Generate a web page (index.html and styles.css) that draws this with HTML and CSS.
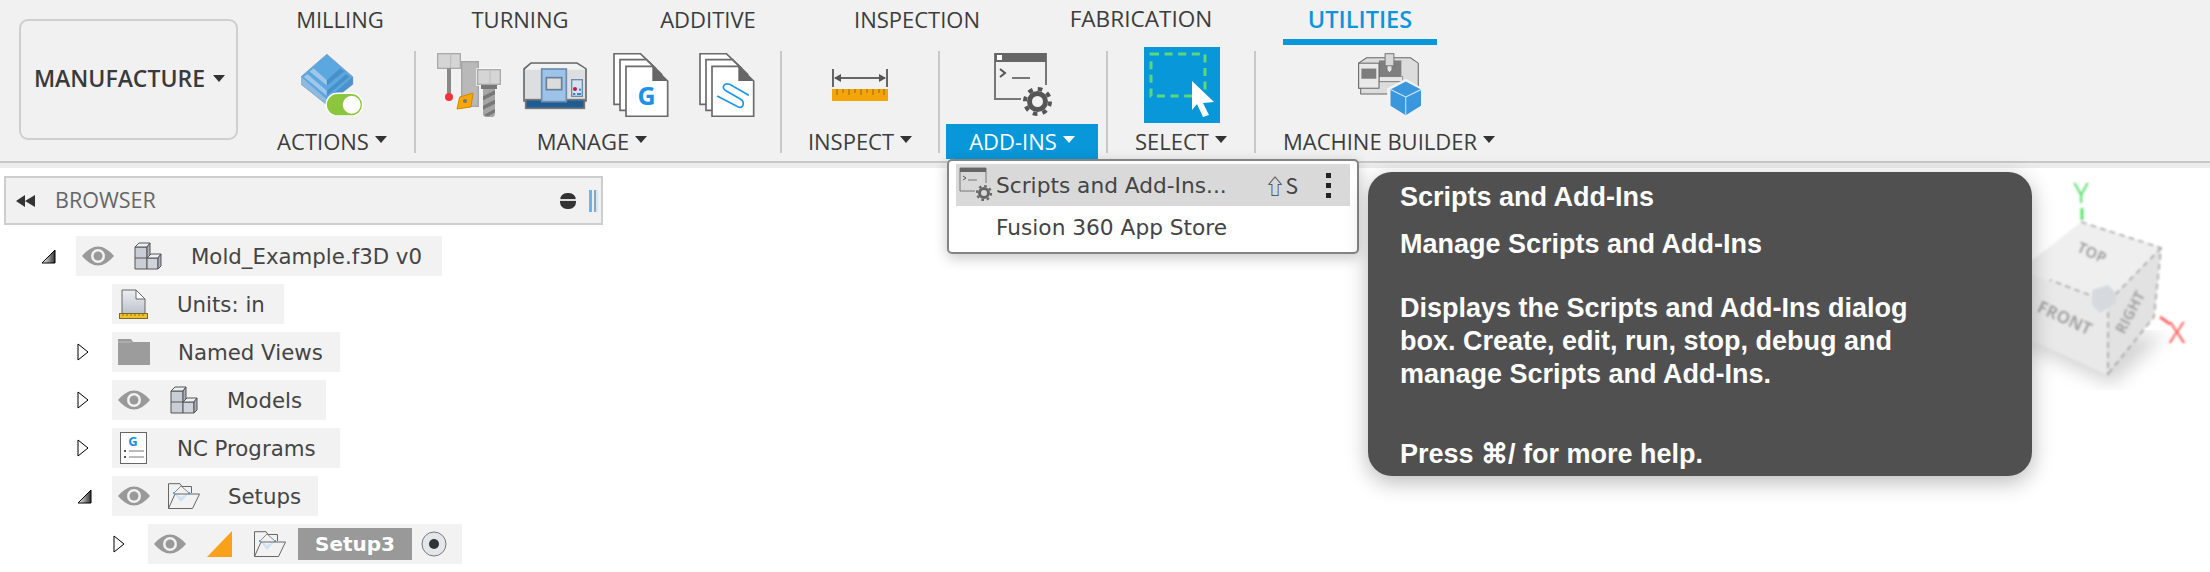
FILE: index.html
```html
<!DOCTYPE html>
<html lang="en">
<head>
<meta charset="utf-8">
<title>Fusion 360 Manufacture</title>
<link rel="stylesheet" href="styles.css">
</head>
<body>
<header class="toolbar">
  <button class="workspace">MANUFACTURE<i class="caret caret-ws"></i></button>
  <div class="ribbon">
    <nav class="tabs">
      <span class="tab t-mill">MILLING</span>
      <span class="tab t-turn">TURNING</span>
      <span class="tab t-add">ADDITIVE</span>
      <span class="tab t-insp">INSPECTION</span>
      <span class="tab t-fab">FABRICATION</span>
      <span class="tab t-util active">UTILITIES</span>
    </nav>
    <div class="groups">
      <section class="group g-actions">
        <div class="icons">
          <svg width="63" height="63" viewBox="126 36 190 190">
            <polygon points="204,40 282,108 282,130 204,192 126,130 126,108" fill="#5ba7e0" stroke="#7fa3c4" stroke-width="3"/>
            <polygon points="126,108 204,176 204,192 126,130" fill="#8fb9dd"/>
            <polygon points="204,176 282,108 282,130 204,192" fill="#4c92cc"/>
            <polygon points="146,100 204,150 204,165 134,108" fill="#a0c6e8"/>
            <polygon points="204,150 262,100 272,108 204,165" fill="#4a90c8"/>
            <polygon points="164,82 204,118 204,134 152,92" fill="#a0c6e8"/>
            <polygon points="204,118 244,82 256,92 204,134" fill="#4a90c8"/>
            <rect x="200" y="155" width="114" height="72" rx="36" fill="#fff"/>
            <rect x="204" y="160" width="106" height="64" rx="32" fill="#8cc63f"/>
            <circle cx="279" cy="192" r="27" fill="#fff"/>
          </svg>
        </div>
        <div class="label">ACTIONS<i class="caret"></i></div>
      </section>
      <div class="sep"></div>
      <section class="group g-manage">
        <div class="icons icons-gap">
          <svg width="64" height="64" viewBox="534 36 192 192">
            <rect x="536" y="38" width="68" height="44" fill="#d5d5d5" stroke="#aaa" stroke-width="4"/>
            <line x1="575" y1="38" x2="575" y2="82" stroke="#bbb" stroke-width="3"/>
            <rect x="564" y="82" width="12" height="80" fill="#888"/>
            <circle cx="570" cy="168" r="12" fill="#f2333b"/>
            <rect x="608" y="62" width="50" height="134" fill="#b9b9b9" stroke="#a5a5a5" stroke-width="4"/>
            <rect x="652" y="82" width="76" height="52" fill="#fff"/>
            <rect x="656" y="86" width="68" height="44" fill="#d5d5d5" stroke="#aaa" stroke-width="4"/>
            <line x1="693" y1="86" x2="693" y2="130" stroke="#bbb" stroke-width="3"/>
            <rect x="666" y="132" width="48" height="12" fill="#777"/>
            <path d="M672 144H708V218Q708 228 696 228H684Q672 228 672 218Z" fill="#a5a5a5"/>
            <path d="M672 166L708 148V160L672 178ZM672 194L708 176V188L672 206ZM674 222L708 204V214L688 226Z" fill="#777"/>
            <polygon points="602,168 642,156 636,198 594,204" fill="#f7a70a" stroke="#d08a00" stroke-width="3"/>
            <circle cx="618" cy="180" r="6" fill="#777"/>
          </svg>
          <svg width="64" height="64" viewBox="792 36 192 192">
            <path d="M795 180V84L816 66H954L981 84V180Z" fill="#dcdedf" stroke="#6a6a6a" stroke-width="5"/>
            <path d="M798 86H978V84L953 69H817Z" fill="#f2f2f2"/>
            <rect x="800" y="176" width="176" height="26" fill="#1e5c91" stroke="#777" stroke-width="5"/>
            <rect x="848" y="84" width="74" height="98" fill="#9dc3e8" stroke="#6d8cb0" stroke-width="5"/>
            <rect x="862" y="110" width="46" height="36" fill="#dcdcdc" stroke="#6a7f96" stroke-width="5"/>
            <rect x="938" y="116" width="32" height="50" fill="#d5e3f0" stroke="#6d8cb0" stroke-width="4"/>
            <circle cx="948" cy="144" r="6" fill="#d0104c"/>
            <rect x="942" y="156" width="7" height="6" fill="#2e86d8"/>
            <rect x="954" y="156" width="12" height="6" fill="#2e86d8"/>
            <rect x="960" y="143" width="6" height="6" fill="#2e86d8"/>
          </svg>
          <svg width="64" height="64" viewBox="1052 36 192 192">
            <path d="M1067 190V38H1146L1192 82V190Z" fill="#fff" stroke="#6a6a6a" stroke-width="5"/>
            <path d="M1085 208V56H1164L1210 100V208Z" fill="#fff" stroke="#6a6a6a" stroke-width="5"/>
            <path d="M1103 226V76H1182L1228 120V226Z" fill="#fff" stroke="#6a6a6a" stroke-width="5"/>
            <polygon points="1182,76 1228,120 1182,120" fill="#666"/>
            <text x="1165" y="192" class="doc-g">G</text>
          </svg>
          <svg width="64" height="64" viewBox="1310 36 192 192">
            <path d="M1325 190V38H1404L1450 82V190Z" fill="#fff" stroke="#6a6a6a" stroke-width="5"/>
            <path d="M1343 208V56H1422L1468 100V208Z" fill="#fff" stroke="#6a6a6a" stroke-width="5"/>
            <path d="M1361 226V76H1440L1486 120V226Z" fill="#fff" stroke="#6a6a6a" stroke-width="5"/>
            <polygon points="1440,76 1486,120 1440,120" fill="#666"/>
            <path d="M1378 166L1440 198C1456 204 1460 182 1446 174L1404 150C1386 140 1398 124 1414 130L1470 162" fill="none" stroke="#2196e6" stroke-width="5" stroke-linecap="round"/>
          </svg>
        </div>
        <div class="label label-manage">MANAGE<i class="caret"></i></div>
      </section>
      <div class="sep"></div>
      <section class="group g-inspect">
        <div class="icons">
          <svg width="56" height="32" viewBox="0 0 56 32">
            <path d="M1 0V18M55 0V18" stroke="#666" stroke-width="2"/>
            <path d="M3 9H53" stroke="#666" stroke-width="2"/>
            <path d="M2 9L9 5V13ZM54 9L47 5V13Z" fill="#555"/>
            <rect x="0" y="20" width="56" height="12" fill="#f5a50a"/>
            <path d="M5 20V26M11 20V24M17 20V26M23 20V24M29 20V26M35 20V24M41 20V26M47 20V24M52 20V26" stroke="#8c6a20" stroke-width="1"/>
          </svg>
        </div>
        <div class="label">INSPECT<i class="caret"></i></div>
      </section>
      <div class="sep"></div>
      <section class="group g-addins">
        <div class="icons">
          <svg class="addin-icon" width="60" height="64" viewBox="0 0 60 64">
            <path d="M27 46H1V1H52V32" fill="none" stroke="#777" stroke-width="2"/>
            <rect x="1" y="0" width="51" height="9" fill="#666"/>
            <rect x="3" y="2" width="5" height="5" fill="#fff"/>
            <path d="M6 16L11 20L6 24" fill="none" stroke="#555" stroke-width="2"/>
            <path d="M18 25H36" stroke="#777" stroke-width="2"/>
            <circle cx="43.5" cy="48.5" r="8" fill="none" stroke="#555" stroke-width="5"/>
            <circle cx="43.5" cy="48.5" r="12.5" fill="none" stroke="#555" stroke-width="4" stroke-dasharray="4.6 5.2"/>
          </svg>
        </div>
        <div class="label label-on">ADD-INS<i class="caret caret-on"></i></div>
      </section>
      <div class="sep"></div>
      <section class="group g-select">
        <div class="icons">
          <svg class="select-icon" width="76" height="76" viewBox="0 0 76 76">
            <rect x="7" y="7" width="54" height="42" fill="none" stroke="#5cd87a" stroke-width="3" stroke-dasharray="8 5.6"/>
            <polygon points="48,34 70,55 59,56 65,68 59,70 53,57 48,63" fill="#fff"/>
          </svg>
        </div>
        <div class="label">SELECT<i class="caret"></i></div>
      </section>
      <div class="sep"></div>
      <section class="group g-builder">
        <div class="icons">
          <svg width="63" height="63" viewBox="720 42 186 186">
            <path d="M722 72L745 56H875L898 72V144H830V163H728V145H722Z" fill="#dcdcdc" stroke="#666" stroke-width="3"/>
            <rect x="782" y="64" width="66" height="64" fill="#7f7f7f"/>
            <rect x="800" y="44" width="26" height="36" fill="#d8d8d8" stroke="#777" stroke-width="3"/>
            <path d="M806 80H820V92L813 100L806 92Z" fill="#e5e5e5" stroke="#777" stroke-width="2"/>
            <rect x="782" y="112" width="70" height="14" fill="#e8e8e8" stroke="#777" stroke-width="2"/>
            <rect x="722" y="72" width="60" height="74" fill="#e9e9e9" stroke="#666" stroke-width="3"/>
            <rect x="730" y="88" width="44" height="30" fill="#7d7d7d"/>
            <polygon points="861,118 910,146 910,200 861,228 806,200 806,146" fill="#f2f2f2"/>
            <polygon points="861,126 906,150 906,198 861,226 816,198 816,150" fill="#3a97dd"/>
            <path d="M861 172L816 150M861 172L906 150M861 172V226" stroke="#cfe6f7" stroke-width="3"/>
          </svg>
        </div>
        <div class="label">MACHINE BUILDER<i class="caret"></i></div>
      </section>
    </div>
  </div>
</header>

<main class="workarea">
  <div class="browser-bar">
    <svg class="rewind" width="19" height="12" viewBox="0 0 19 12"><path d="M0 6L9 0V12ZM9 6L19 0V12Z" fill="#333"/></svg>
    <span class="browser-title">BROWSER</span>
    <span class="minus"></span>
    <span class="grip"></span>
  </div>

  <ul class="tree">
    <li class="row d0">
      <span class="slot"><svg class="tw-open" width="15" height="15" viewBox="0 0 15 15"><use href="#twist-open"/></svg></span>
      <div class="item item-mold">
        <svg class="eye" viewBox="0 0 32 20"><use href="#eye"/></svg>
        <svg class="ic" width="28" height="28" viewBox="0 0 28 28"><use href="#component"/></svg>
        <span class="name">Mold_Example.f3D v0</span>
      </div>
    </li>
    <li class="row d1">
      <span class="slot"></span>
      <div class="item item-units">
        <svg class="ic" width="29" height="30" viewBox="0 0 29 30">
          <path d="M3 25V1H17L26 10V25Z" fill="url(#blk)" stroke="#666"/>
          <path d="M17 1V10H26Z" fill="#fff" stroke="#666"/>
          <rect x="0.5" y="24.5" width="28" height="5" fill="#eec02c" stroke="#7a6a24"/>
          <path d="M4 25V27M8 25V27M12 25V27M16 25V27M20 25V27M24 25V27" stroke="#8a7420"/>
        </svg>
        <span class="name">Units: in</span>
      </div>
    </li>
    <li class="row d1">
      <span class="slot"><svg class="tw-closed" width="12" height="18" viewBox="0 0 12 18"><use href="#twist-closed"/></svg></span>
      <div class="item item-views">
        <svg class="ic" width="32" height="26" viewBox="0 0 32 26"><path d="M0 0H13L15 3H32V26H0Z" fill="#9c9c9c"/><path d="M0 3H13" stroke="#bbb" stroke-width="1"/></svg>
        <span class="name">Named Views</span>
      </div>
    </li>
    <li class="row d1">
      <span class="slot"><svg class="tw-closed" width="12" height="18" viewBox="0 0 12 18"><use href="#twist-closed"/></svg></span>
      <div class="item item-models">
        <svg class="eye" viewBox="0 0 32 20"><use href="#eye"/></svg>
        <svg class="ic" width="28" height="28" viewBox="0 0 28 28"><use href="#component"/></svg>
        <span class="name">Models</span>
      </div>
    </li>
    <li class="row d1">
      <span class="slot"><svg class="tw-closed" width="12" height="18" viewBox="0 0 12 18"><use href="#twist-closed"/></svg></span>
      <div class="item item-nc">
        <svg class="ic" width="27" height="32" viewBox="0 0 27 32">
          <rect x="0.5" y="0.5" width="26" height="31" fill="#fff" stroke="#666"/>
          <text x="13" y="14" class="nc-g">G</text>
          <path d="M9 19H24M9 25H24" stroke="#777" stroke-width="1"/>
          <path d="M4 18H6V20H4ZM4 24H6V26H4Z" fill="#555"/>
        </svg>
        <span class="name">NC Programs</span>
      </div>
    </li>
    <li class="row d1">
      <span class="slot"><svg class="tw-open" width="15" height="15" viewBox="0 0 15 15"><use href="#twist-open"/></svg></span>
      <div class="item item-setups">
        <svg class="eye" viewBox="0 0 32 20"><use href="#eye"/></svg>
        <svg class="ic" width="32" height="26" viewBox="0 0 32 26"><use href="#setup-folder"/></svg>
        <span class="name">Setups</span>
      </div>
    </li>
    <li class="row d2">
      <span class="slot"><svg class="tw-closed" width="12" height="18" viewBox="0 0 12 18"><use href="#twist-closed"/></svg></span>
      <div class="item item-setup">
        <svg class="eye" viewBox="0 0 32 20"><use href="#eye"/></svg>
        <svg class="tri" width="25" height="26" viewBox="0 0 25 26"><polygon points="0,26 25,0 25,26" fill="#f9a11b"/></svg>
        <svg class="folder" width="32" height="26" viewBox="0 0 32 26"><use href="#setup-folder"/></svg>
        <span class="setup-label">Setup3</span>
        <svg class="radio" width="26" height="26" viewBox="0 0 26 26">
          <circle cx="13" cy="13" r="12" fill="#e4e6ec" stroke="#777"/>
          <circle cx="13" cy="13" r="5" fill="#333"/>
        </svg>
      </div>
    </li>
  </ul>

  <svg class="defs" width="0" height="0">
    <defs>
      <linearGradient id="tw" x1="0" y1="0" x2="1" y2="0"><stop offset="0" stop-color="#fff"/><stop offset="1" stop-color="#333"/></linearGradient>
      <linearGradient id="blk" x1="0" y1="0" x2="0" y2="1"><stop offset="0" stop-color="#eceef1"/><stop offset="1" stop-color="#bcc1cb"/></linearGradient>
      <symbol id="eye" viewBox="0 0 32 20">
        <path d="M0 10Q16 -9 32 10Q16 29 0 10Z" fill="#999"/>
        <circle cx="16" cy="10" r="7" fill="#f2f2f2"/>
        <circle cx="16" cy="10" r="4.5" fill="#999"/>
      </symbol>
      <symbol id="twist-open" viewBox="0 0 15 15"><polygon points="1,14 14,1 14,14" fill="url(#tw)" stroke="#000"/></symbol>
      <symbol id="twist-closed" viewBox="0 0 12 18"><polygon points="1,1 11,9 1,17" fill="#fff" stroke="#000"/></symbol>
      <symbol id="component" viewBox="0 0 28 28">
        <path d="M1 5H13V27H1Z" fill="#c9cdd6" stroke="#555"/>
        <path d="M1 5L5 1H16L13 5Z" fill="#eef0f3" stroke="#555"/>
        <path d="M13 5L16 1V13L13 16Z" fill="#a9aeb8" stroke="#555"/>
        <path d="M1 16H13" stroke="#555"/>
        <path d="M13 16H24V27H13Z" fill="#cfd3db" stroke="#555"/>
        <path d="M13 16L17 12H27L24 16Z" fill="#eef0f3" stroke="#555"/>
        <path d="M24 16L27 12V24L24 27Z" fill="#a9aeb8" stroke="#555"/>
      </symbol>
      <symbol id="setup-folder" viewBox="0 0 32 26">
        <path d="M.5 25.5V.7H12L14 3.5H23.5V10" fill="none" stroke="#666"/>
        <path d="M6 10L13 3L21 10" fill="none" stroke="#888"/>
        <path d="M6 10L13 19L21 10L13 14Z" fill="#cfe3f5"/>
        <path d="M5 9H7V11H5ZM20 9H22V11H20Z" fill="#5aa9e6"/>
        <path d="M.5 25.5L7 11H31.5L24.5 25.5Z" fill="none" stroke="#666"/>
      </symbol>
    </defs>
  </svg>

  <svg class="viewcube" width="205" height="250" viewBox="0 -30 205 250">
    <defs>
      <filter id="soft"><feGaussianBlur stdDeviation="0.9"/></filter>
      <filter id="shadow"><feGaussianBlur stdDeviation="9"/></filter>
    </defs>
    <polygon points="0,150 112,200 165,150" fill="#aaa" opacity=".5" filter="url(#shadow)"/>
    <g filter="url(#soft)">
      <polygon points="81,37 161,63 108,117 20,85" fill="#efefef"/>
      <polygon points="20,85 108,117 107,190 20,150" fill="#e9e9e9"/>
      <polygon points="108,117 161,63 154,132 107,190" fill="#e2e2e2"/>
      <path d="M81 37L161 63L154 132L107 190M108 117V190M108 117L161 63M108 117L50 95" fill="none" stroke="#999" stroke-width="1.5" stroke-dasharray="6 4"/>
      <path d="M82 23V35" stroke="#55e26a" stroke-width="3"/>
      <path d="M160 132L170 139" stroke="#ff6b6b" stroke-width="3"/>
      <polygon points="92,105 108,100 116,108 116,118 100,128 92,120" fill="#d6dade"/>
      <text x="0" y="0" class="cube-txt" transform="translate(76 66) rotate(25)">TOP</text>
      <text x="0" y="0" class="cube-txt cube-lg" transform="translate(36 126) rotate(25)">FRONT</text>
      <text x="0" y="0" class="cube-txt" transform="translate(124 150) rotate(-62)">RIGHT</text>
      <text x="81" y="18" class="axis axis-y">Y</text>
      <text x="177" y="158" class="axis axis-x">X</text>
    </g>
  </svg>

  <div class="menu">
    <div class="menu-row menu-row-on">
      <svg class="menu-ic" width="34" height="36" viewBox="0 0 34 36">
        <path d="M16 24H1V1H27V16" fill="none" stroke="#777" stroke-width="1"/>
        <rect x="1" y="1" width="26" height="4" fill="#666"/>
        <path d="M4 9L7 11L4 13" fill="none" stroke="#555"/>
        <path d="M9 13H18" stroke="#777"/>
        <circle cx="25" cy="26" r="4.5" fill="none" stroke="#666" stroke-width="3"/>
        <circle cx="25" cy="26" r="7" fill="none" stroke="#666" stroke-width="2.2" stroke-dasharray="2.6 2.9"/>
      </svg>
      <span class="menu-text">Scripts and Add-Ins...</span>
      <span class="menu-key">⇧S</span>
      <span class="menu-dots"><i></i><i></i><i></i></span>
    </div>
    <div class="menu-row"><span class="menu-text menu-plain">Fusion 360 App Store</span></div>
  </div>

  <aside class="tip">
    <p class="tip-line tip-a">Scripts and Add-Ins</p>
    <p class="tip-line tip-b">Manage Scripts and Add-Ins</p>
    <p class="tip-line tip-c">Displays the Scripts and Add-Ins dialog<br>box. Create, edit, run, stop, debug and<br>manage Scripts and Add-Ins.</p>
    <p class="tip-line tip-d">Press ⌘/ for more help.</p>
  </aside>
</main>
</body>
</html>
```
FILE: styles.css
```css
* { box-sizing: border-box; }
html, body { margin: 0; padding: 0; }
body {
  width: 2210px;
  height: 572px;
  overflow: hidden;
  background: #fff;
  font-family: "Open Sans", "DejaVu Sans", sans-serif;
  color: #3c3c3c;
  position: relative;
}

/* toolbar */
.toolbar {
  display: flex;
  height: 163px;
  padding-left: 19px;
  background: #f1f1f1;
  border-bottom: 2px solid #c8c8c8;
}
.workspace {
  width: 219px;
  height: 121px;
  margin-top: 19px;
  padding: 0 0 3px 2px;
  background: #f1f1f1;
  border: 2px solid #cfcfcf;
  border-radius: 9px;
  font: 600 23px "Open Sans", sans-serif;
  color: #3a3a3a;
  display: flex;
  align-items: center;
  justify-content: center;
}
.ribbon { margin-left: 12px; width: 1272px; }

.tabs { display: flex; height: 45px; }
.tab {
  display: flex;
  align-items: center;
  justify-content: center;
  height: 45px;
  font-size: 22px;
  padding-bottom: 8px;
  color: #3c3c3c;
}
.t-mill { width: 180px; }
.t-turn { width: 180px; }
.t-add { width: 196px; }
.t-insp { width: 222px; }
.t-fab { width: 226px; font-size: 22.6px; }
.t-util { width: 154px; margin-left: 29px; }
.active { color: #0a96d8; font-size: 23.5px; font-weight: 600; border-bottom: 6px solid #0897d9; padding-bottom: 2px; }

.groups { display: flex; height: 117px; }
.group { display: flex; flex-direction: column; align-items: center; }
.g-actions { width: 164px; }
.g-manage { width: 364px; }
.g-inspect { width: 156px; }
.g-addins { width: 166px; }
.g-select { width: 146px; }
.g-builder { width: 266px; }
.sep { width: 2px; height: 102px; margin-top: 6px; background: #c9c9c9; }

.icons {
  height: 77px;
  margin-top: 1px;
  display: flex;
  align-items: center;
  justify-content: center;
}
.icons-gap { gap: 22px; }
.addin-icon { margin-left: 2px; }
.select-icon { background: #0897d9; margin-left: 2px; }

.label {
  display: flex;
  align-items: center;
  justify-content: center;
  height: 35px;
  margin-top: 1px;
  padding-bottom: 2px;
  font-size: 22px;
  color: #3c3c3c;
  white-space: nowrap;
}
.label-manage { margin-right: 12px; }
.label-on { width: 152px; background: #0897d9; color: #fff; margin-right: 2px; }
.caret {
  display: inline-block;
  width: 0;
  height: 0;
  margin-left: 6px;
  margin-top: -3px;
  border-left: 6px solid transparent;
  border-right: 6px solid transparent;
  border-top: 7px solid #333;
}
.caret-on { border-top-color: #fff; }
.caret-ws { margin-left: 8px; margin-top: 0; }

/* browser */
.workarea { display: block; padding-top: 8px; border-top: 5px solid #ececec; }
.browser-bar {
  display: flex;
  align-items: center;
  width: 599px;
  height: 49px;
  margin-left: 4px;
  padding: 0 3px 0 10px;
  background: #f1f1f1;
  border: 2px solid #cdcdcd;
}
.browser-title { margin-left: 20px; margin-top: -2px; font-size: 21.5px; color: #666; }
.minus {
  margin-left: auto;
  width: 16px;
  height: 16px;
  border-radius: 7px;
  background: linear-gradient(#333 0 6px, #ddd 6px 8px, #333 8px);
}
.grip {
  margin-left: 13px;
  width: 9px;
  height: 22px;
  background: linear-gradient(90deg, #6ab4ea 0 3px, #e8f1f8 3px 5px, #8fa6b8 5px 7px, #cfe6f7 7px);
}

.tree { list-style: none; margin: 11px 0 0; padding: 0; }
.row { display: flex; align-items: center; height: 40px; margin-bottom: 8px; }
.d0 { margin-left: 40px; }
.d1 { margin-left: 76px; }
.d2 { margin-left: 112px; }
.slot { width: 36px; display: flex; align-items: center; flex: none; padding-left: 1px; }
.item {
  display: flex;
  align-items: center;
  height: 40px;
  padding: 0 0 0 6px;
  background: #f2f2f2;
}
.eye { width: 32px; height: 20px; margin-right: 20px; flex: none; }
.ic { flex: none; }
.name {
  margin-left: 28px;
  font-family: "DejaVu Sans", sans-serif;
  font-size: 21.3px;
  color: #444;
  white-space: nowrap;
}
.item-mold { width: 366px; }
.item-mold .name { margin-left: 29px; }
.item-units { width: 172px; padding-left: 7px; }
.item-units .name { margin-left: 29px; }
.item-views { width: 228px; }
.item-models { width: 214px; }
.item-models .name { margin-left: 29px; }
.item-nc { width: 228px; padding-left: 8px; }
.item-nc .name { margin-left: 30px; }
.item-setups { width: 206px; }
.item-setups .eye { margin-right: 18px; }
.item-setup { width: 314px; }
.item-setup .eye { margin-right: 21px; }
.folder { margin-left: 22px; }
.setup-label {
  width: 114px;
  height: 32px;
  margin-left: 12px;
  background: #999;
  color: #fff;
  font: 700 20px "DejaVu Sans", sans-serif;
  display: flex;
  align-items: center;
  justify-content: center;
}
.radio { margin-left: 9px; }
.defs { position: absolute; }

/* svg text */
.doc-g { font: 700 75px "Open Sans", sans-serif; fill: #1e90e6; text-anchor: middle; }
.nc-g { font: 700 13px "Open Sans", sans-serif; fill: #1e90e6; text-anchor: middle; }
.cube-txt { font: 700 15px "Open Sans", sans-serif; fill: #a2a2a2; }
.cube-lg { font-size: 17px; }
.axis { font-family: "Open Sans", sans-serif; text-anchor: middle; }
.axis-y { font-size: 28px; fill: #66e37a; }
.axis-x { font-size: 30px; fill: #ff6b6b; }

/* overlays */
.viewcube { position: absolute; left: 2000px; top: 155px; }
.menu {
  position: absolute;
  left: 947px;
  top: 159px;
  width: 412px;
  height: 95px;
  padding: 3px 7px;
  background: #fff;
  border: 2px solid #848484;
  border-radius: 5px;
  box-shadow: 0 4px 14px rgba(0,0,0,.22);
}
.menu-row { display: flex; align-items: center; height: 42px; }
.menu-row-on { background: #d9d9d9; }
.menu-ic { margin-left: 3px; flex: none; }
.menu-text {
  margin-left: 3px;
  font-family: "DejaVu Sans", sans-serif;
  font-size: 21.7px;
  color: #444;
  white-space: nowrap;
}
.menu-plain { margin-left: 40px; }
.menu-key { margin-left: auto; font: 21px "Noto Sans CJK JP", "DejaVu Sans", sans-serif; color: #444; }
.menu-dots { display: flex; flex-direction: column; gap: 5px; margin: 0 19px 0 28px; }
.menu-dots i { display: block; width: 5px; height: 5px; background: #222; }

.tip {
  position: absolute;
  left: 1368px;
  top: 172px;
  width: 664px;
  height: 304px;
  padding: 0 32px;
  background: #505050;
  border-radius: 24px;
  box-shadow: 0 6px 22px rgba(0,0,0,.28);
  color: #fff;
  font: 700 27px/33px "Liberation Sans", sans-serif;
}
.tip-line { margin: 0; }
.tip-a { padding-top: 9px; }
.tip-b { margin-top: 14px; }
.tip-c { margin-top: 31px; }
.tip-d { margin-top: 47px; }
```
